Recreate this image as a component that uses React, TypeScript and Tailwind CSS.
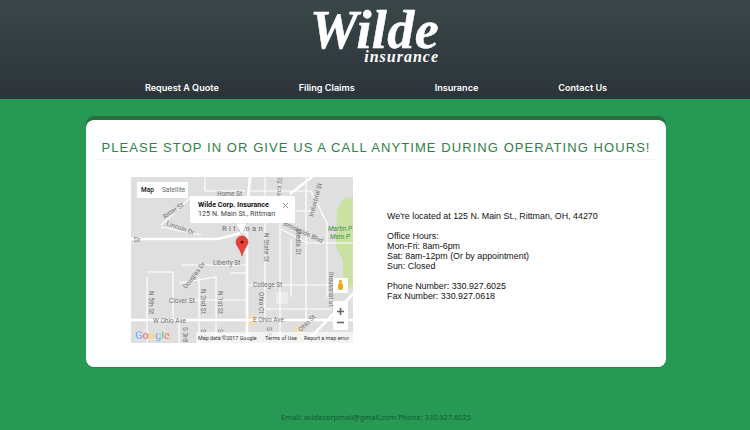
import React from 'react';

const roads = [
  'M0 62 L87 62 L114 55 L119 0',
  'M116 55 L116 166',
  'M0 143 L222 143',
  'M224 115 L174 166',
  'M181 0 L159 17',
];

const thinRoads = [
  'M74 0 L74 14 L114 14', 'M60 20 L30 48', 'M30 50 L70 58', 'M134 0 L134 143', 'M149 0 L149 62',
  'M119 14 L180 14 L196 46', 'M134 34 L180 34', 'M150 52 L176 66 L222 66', 'M175 0 L175 143', 'M196 46 L196 120',
  'M50 88 L116 88', 'M16 95 L42 95 L42 143', 'M16 100 L16 166', 'M38 123 L116 123', 'M68 100 L68 166',
  'M85 100 L85 166', 'M48 106 L85 100', 'M116 108 L210 108', 'M149 62 L149 166', 'M134 132 L200 132',
  'M48 143 L48 166', 'M160 62 L160 120', 'M100 96 L116 96', 'M80 158 L116 158',
];

const labels: [string, number, number, number][] = [
  ['Home St', 86, 19, 0], ['Ritter St', 34, 42, -35], ['Lincoln Dr', 35, 48, 20], ['Brookside Blvd', 152, 48, 25],
  ['Industrial St', 182, 40, -75], ['N Seneca St', 148, 36, -85], ['N State St', 133, 56, 90], ['Media St', 165, 52, 90],
  ['Liberty St', 82, 88, 0], ['College St', 122, 110, 0], ['Clover St', 38, 126, 0],
  ['Douglas Dr', 55, 112, -52], ['N 5th St', 18, 114, 90], ['N 2nd St', 70, 112, 90], ['N 1st St', 87, 114, 90],
  ['Ohio Ct', 128, 115, 90], ['W Ohio Ave', 22, 146, 0], ['E Ohio Ave', 122, 145, 0], ['Industrial St', 198, 95, 90],
  ['S 3rd', 52, 150, 90], ['S 2', 70, 152, 90], ['S 1', 87, 152, 90], ['S S', 136, 150, 90],
  ['Ohio St', 170, 155, -45], ['Dr', 3, 65, 0],
];

function MapDrawing() {
  return (
    <svg width="222" height="166" viewBox="0 0 222 166" className="block shrink-0" fontFamily="Roboto, sans-serif">
      <rect width="222" height="166" fill="#dfdfdf" />
      <path d="M222 20 L213 21 L206 33 L205 70 L212 84 L212 116 L222 108 Z" fill="#c9e2a3" />
      <rect x="145" y="115" width="12" height="12" fill="#ececec" />
      <rect x="113" y="138" width="12" height="10" fill="#f2dcb8" />
      <path d="M163 150 L171 147 L171 164 L163 164 Z" fill="#ecdfc4" />
      {thinRoads.map((d) => (
        <path key={d} d={d} stroke="#fff" strokeWidth="1.2" fill="none" />
      ))}
      {roads.map((d) => (
        <path key={d} d={d} stroke="#fff" strokeWidth="2.6" fill="none" />
      ))}
      {labels.map(([t, x, y, r]) => (
        <text key={t + x + y} x={x} y={y} fontSize="6.5" fill="#6f6f6f" transform={`rotate(${r} ${x} ${y})`}>
          {t}
        </text>
      ))}
      <text x="91" y="54" fontSize="7.5" letterSpacing="2.4" fill="#6b6b6b">Rittman</text>
      <text x="197" y="54" fontSize="6.5" fontStyle="italic" fill="#3f8f4a">Martin P</text>
      <text x="199" y="62" fontSize="6.5" fontStyle="italic" fill="#3f8f4a">Mem P</text>

      <rect x="6" y="5" width="51" height="16" fill="#fff" />
      <text x="10" y="15" fontSize="6.5" fontWeight="500" fill="#111">Map</text>
      <text x="31" y="15" fontSize="6.5" fill="#666">Satellite</text>

      <path d="M104 46 L111 58 L116 46 Z" fill="#fff" stroke="#aaa" strokeWidth="0.5" />
      <rect x="59" y="19" width="105" height="27" fill="#fff" />
      <text x="67" y="30" fontSize="7.2" fontWeight="700" fill="#111">Wilde Corp. Insurance</text>
      <text x="67" y="39" fontSize="7.2" fill="#444">125 N. Main St., Rittman</text>
      <path d="M152 26 L157 31 M157 26 L152 31" stroke="#888" strokeWidth="0.9" />

      <path d="M111 79 C109 71 105 69 105 65 A6 6 0 0 1 117 65 C117 69 113 71 111 79 Z" fill="#e8413a" stroke="#b3261e" strokeWidth="0.5" />
      <circle cx="111" cy="65" r="1.5" fill="#5c0d0a" />

      <rect x="202" y="101" width="15" height="15" fill="#fff" />
      <circle cx="209.5" cy="104.5" r="1.7" fill="#f5b21a" />
      <rect x="207" y="106" width="5" height="7" rx="2" fill="#f0a818" />
      <rect x="202" y="124" width="15" height="29" fill="#fff" />
      <path d="M206 134.5 H213 M209.5 131 V138" stroke="#666" strokeWidth="1.6" />
      <path d="M206 145.5 H213" stroke="#666" strokeWidth="1.6" />

      <text x="4" y="162" fontSize="11" fontWeight="500" stroke="#fff" strokeWidth="0.3">
        <tspan fill="#4285f4">G</tspan><tspan fill="#ea4335">o</tspan><tspan fill="#fbbc05">o</tspan><tspan fill="#4285f4">g</tspan><tspan fill="#34a853">l</tspan><tspan fill="#ea4335">e</tspan>
      </text>
      <rect x="65" y="155" width="157" height="11" fill="#fff" opacity="0.65" />
      <text x="67" y="163" fontSize="5.4" fill="#333">Map data ©2017 Google</text>
      <text x="134" y="163" fontSize="5.4" fill="#333">Terms of Use</text>
      <text x="173" y="163" fontSize="5.4" fill="#333">Report a map error</text>
    </svg>
  );
}

export default function App() {
  const navItems = ['Request A Quote', 'Filing Claims', 'Insurance', 'Contact Us'];

  return (
    <div className="h-[430px] w-[750px] overflow-hidden bg-[#289855] flex flex-col font-['Liberation_Sans',sans-serif]">
      <header className="h-[99px] shrink-0 bg-gradient-to-b from-[#3a4748] to-[#2c343a] flex flex-col items-center">
        <div className="mt-[10px] h-[56px] w-[126px] ml-[2px] flex flex-col items-end font-['Liberation_Serif',serif] italic font-bold text-white">
          <div className="text-[54px] leading-[41px] tracking-[0.4px] whitespace-nowrap [-webkit-text-stroke:0.5px_white]">Wilde</div>
          <div className="text-[16px] leading-[12px] tracking-[1px] whitespace-nowrap">insurance</div>
        </div>
        <nav className="mt-[15px] ml-[2px] flex justify-center gap-20 font-['Inter',sans-serif] text-[9.1px] leading-[14px] font-semibold text-white">
          {navItems.map((item) => (
            <span key={item} className="whitespace-nowrap">{item}</span>
          ))}
        </nav>
      </header>

      <main className="mt-[21px] ml-[86px] h-[247px] w-[580px] shrink-0 rounded-lg bg-white shadow-[0_-4px_0_#256f40,0_1px_0_#1f8a4a]">
        <h1 className="mx-[8px] h-[40px] pt-[19px] border-b border-[#f4f4f4] text-center text-[13px] leading-[18px] font-light tracking-[1.07px] text-[#2f8047] whitespace-nowrap">
          PLEASE STOP IN OR GIVE US A CALL ANYTIME DURING OPERATING HOURS!
        </h1>
        <div className="mt-[17px] ml-[45px] flex">
          <MapDrawing />
          <div className="ml-[34px] mt-[34px] text-[8.9px] leading-[10px] text-[#111] flex flex-col gap-[10px]">
            <p>We're located at 125 N. Main St., Rittman, OH, 44270</p>
            <p>
              Office Hours:<br />
              Mon-Fri: 8am-6pm<br />
              Sat: 8am-12pm (Or by appointment)<br />
              Sun: Closed
            </p>
            <p>
              Phone Number: 330.927.6025<br />
              Fax Number: 330.927.0618
            </p>
          </div>
        </div>
      </main>

      <footer className="mt-[44px] text-center ml-[2px] font-['Noto_Sans',sans-serif] text-[7.45px] leading-[12px] text-[#125c33]">
        Email: wildecorpmail@gmail.com Phone: 330.927.6025
      </footer>
    </div>
  );
}
